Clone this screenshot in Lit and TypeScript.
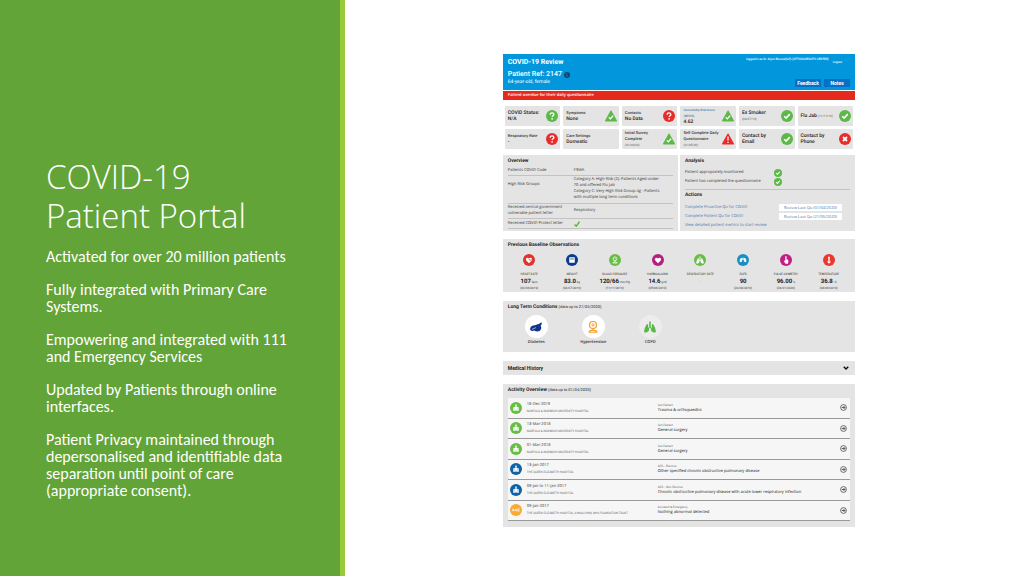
import { LitElement, html, svg, css } from "lit";
import { customElement, property, state } from "lit/decorators.js";

type Status = "ok" | "unknown" | "okTri" | "warnTri" | "no" | "";

const GREEN = "#5cb947";
const RED = "#e62d2a";

const tick = (colour = "#fff") =>
  svg`<path d="M6.5 12.5l3.8 3.8 7.2-8" fill="none" stroke=${colour} stroke-width="3.2"/>`;

const question = svg`
  <path d="M8.4 9.4c0-2.4 1.6-3.6 3.7-3.6s3.6 1.3 3.6 3.2c0 2.6-3.4 2.6-3.4 5.2" fill="none" stroke="#fff" stroke-width="2.6"/>
  <circle cx="12.2" cy="17.7" r="1.7" fill="#fff"/>`;

const triangle = (fill: string) =>
  svg`<path d="M12 2.5L22.5 21.5H1.5z" fill=${fill} stroke=${fill} stroke-width="3" stroke-linejoin="round"/>`;

@customElement("status-icon")
export class StatusIcon extends LitElement {
  @property() kind: Status = "ok";
  @property() tone = "green";
  static styles = css`
    :host { display: block; flex: none; }
    svg { display: block; width: 100%; height: 100%; }
  `;
  render() {
    const tone = this.tone === "red" ? RED : GREEN;
    const body =
      this.kind === "ok" ? svg`<circle cx="12" cy="12" r="12" fill=${tone}/>${tick()}`
      : this.kind === "unknown" ? svg`<circle cx="12" cy="12" r="12" fill=${tone}/>${question}`
      : this.kind === "no" ? svg`<circle cx="12" cy="12" r="12" fill=${RED}/><path d="M8 8l8 8M16 8l-8 8" stroke="#fff" stroke-width="3.6"/>`
      : this.kind === "okTri" ? svg`${triangle(tone)}<path d="M7.6 14.8l3 3 5.6-6.2" fill="none" stroke="#fff" stroke-width="2.6"/>`
      : svg`${triangle(RED)}<path d="M12 7v8" stroke="#fff" stroke-width="2.4"/><circle cx="12" cy="18.6" r="1.5" fill="#fff"/>`;
    return html`<svg viewBox="0 0 24 24" aria-hidden="true">${body}</svg>`;
  }
}

const lungs = (fill: string) => svg`
  <path d="M11 5v7l-1.4 1.2V8.4C8 7.4 5.2 11.600 4.400 18.200c-.1 1.800 3.800 1 5.600-.8.9-1 .8-2.400.8-3.600L12 12.800l1.200 1c0 1.200-.1 2.600.8 3.600 1.800 1.800 5.700 2.600 5.600.8C18.800 11.600 16 7.400 14.400 8.400v4.800L13 12V5z" fill=${fill}/>`;

const glyphs: Record<string, unknown> = {
  heart: svg`<path d="M12 18.500L6.500 13C3.800 9.500 8.500 5 12 8.800 15.500 5 20.200 9.500 17.500 13z" fill="#fff"/><path d="M11 10.500h2l1.200 2.500 1-1.500h3" fill="none" stroke="#e0322e" stroke-width="1.200"/>`,
  weight: svg`<rect x="6.500" y="6.500" width="11" height="11" rx="1.200" fill="#fff"/><path d="M8.500 10h7" stroke="#0b3a8d" stroke-width="1.600"/>`,
  pressure: svg`<circle cx="12" cy="9.500" r="3.700" fill="none" stroke="#fff" stroke-width="1.500"/><path d="M12 9.500l1.500-1.500M12 13.200v2.300M7.500 18c0-3 9-3 9 0z" fill="none" stroke="#fff" stroke-width="1.500"/>`,
  blood: svg`<path d="M12 18.500L6.500 13C3.800 9.500 8.500 5 12 8.800 15.500 5 20.200 9.500 17.500 13z" fill="#fff"/>`,
  lungs: lungs("#fff"),
  flow: svg`<path d="M5.500 13a6.500 5.500 0 0 1 13 0v3h-4v-3.500h-5V16h-4z" fill="#fff"/><path d="M12 8v9" stroke="#1b8fc4" stroke-width="1.300"/>`,
  finger: svg`<path d="M10.500 4.500h2.600v6.500c2.600 0 3.900.9 3.700 3.500l-.8 5h-5L7.500 14l1-1 2 1.200z" fill="#fff"/>`,
  temp: svg`<path d="M10.300 6.500a1.700 1.700 0 0 1 3.400 0v6.700a3 3 0 1 1-3.400 0z" fill="#fff"/><path d="M12 9v6.500" stroke="#ec3630" stroke-width="1"/>`,
  hospital: svg`<path d="M6.500 17.500V10.500h3V9h5v1.500h3v7z" fill="#fff"/><path d="M12 5v4M10 6.500h4" stroke="#fff" stroke-width="1.500"/><path d="M8.500 13.500H10M14 13.500h1.500M12 17.500v-2.500" stroke="currentColor" stroke-width="1.300"/>`,
  emergency: svg`<path d="M4.500 14.500l2-5 2 5M5.300 13h2.400M10 14l1-4 2 4.200M11 14.300l3-4M15.300 9.800h4M15.300 12h3.400M15.300 14.200h4M15.500 9.500v5" fill="none" stroke="#fff" stroke-width="1.300"/>`,
};

@customElement("round-icon")
export class RoundIcon extends LitElement {
  @property() name = "";
  @property() tone = "#5cb947";
  static styles = css`
    :host { display: block; flex: none; }
    svg { display: block; width: 100%; height: 100%; }
  `;
  render() {
    return html`<svg viewBox="0 0 24 24" color=${this.tone} aria-hidden="true">
      <circle cx="12" cy="12" r="12" fill=${this.tone} />${glyphs[this.name]}
    </svg>`;
  }
}

interface Card { small?: string; title?: string; label?: string; value?: string; note?: string; inline?: string; link?: boolean; icon: Status; tone?: string }

const cards: Card[] = [
  { title: "COVID Status:\nN/A", icon: "unknown" },
  { label: "Symptoms", value: "None", icon: "okTri" },
  { label: "Contacts", value: "No Data", icon: "unknown", tone: "red" },
  { label: "Comorbidity Risk Score\n(WHHD)", value: "4.62", link: true, icon: "okTri" },
  { title: "Ex Smoker", note: "(02/07/19)", icon: "ok" },
  { title: "Flu Jab", inline: "(11/11/19)", icon: "ok" },
  { label: "Respiratory Rate", value: "-", icon: "unknown", tone: "red" },
  { label: "Care Settings", value: "Domestic", icon: "" },
  { small: "Initial Survey\nComplete", note: "(01/04/20)", icon: "okTri" },
  { small: "Self Complete Daily\nQuestionnaire", note: "(31/05/20)", icon: "warnTri" },
  { title: "Contact by\nEmail", icon: "ok" },
  { title: "Contact by\nPhone", icon: "no" },
];

const observations = [
  ["heart", "#e0322e", "HEART RATE", "107", "bpm", "(03/08/2019)"],
  ["weight", "#0b3a8d", "WEIGHT", "83.0", "kg", "(02/07/2019)"],
  ["pressure", "#67bd45", "BLOOD PRESSURE", "120/66", "mm/Hg", "(11/11/2019)"],
  ["blood", "#b5207f", "HAEMOGLOBIN", "14.6", "g/dl", "(05/08/2019)"],
  ["lungs", "#67bd45", "RESPIRATORY RATE", "", "-", ""],
  ["flow", "#1b8fc4", "EGFR", "90", "", "(22/06/2019)"],
  ["finger", "#c01f84", "PULSE OXIMETRY", "96.00", "%", "(04/01/2020)"],
  ["temp", "#ec3630", "TEMPERATURE", "36.8", "°C", "(04/08/2019)"],
];

const activity = [
  ["hospital", "#67bd45", "18-Dec-2019", "NORFOLK & NORWICH UNIVERSITY HOSPITAL", "Out Patient", "Trauma & orthopaedics"],
  ["hospital", "#67bd45", "13-Mar-2018", "NORFOLK & NORWICH UNIVERSITY HOSPITAL", "Out Patient", "General surgery"],
  ["hospital", "#67bd45", "01-Mar-2018", "NORFOLK & NORWICH UNIVERSITY HOSPITAL", "Out Patient", "General surgery"],
  ["hospital", "#0f62a6", "13-Jan-2017", "THE QUEEN ELIZABETH HOSPITAL", "APC - Elective", "Other specified chronic obstructive pulmonary disease"],
  ["hospital", "#0f62a6", "09-Jan to 11-Jan-2017", "THE QUEEN ELIZABETH HOSPITAL", "APC - Non Elective", "Chronic obstructive pulmonary disease with acute lower respiratory infection"],
  ["emergency", "#f9aa35", "09-Jan-2017", "THE QUEEN ELIZABETH HOSPITAL, KINGS LYNN, NHS FOUNDATION TRUST", "Accident & Emergency", "Nothing abnormal detected"],
];

@customElement("patient-dashboard")
export class PatientDashboard extends LitElement {
  @state() private historyOpen = false;

  static styles = css`
    :host { display: block; font: 400 4px/6px "Open Sans", Roboto, sans-serif; color: #333; text-rendering: geometricPrecision; }
    * { box-sizing: border-box; }
    h2, h3, p, ul, dl { margin: 0; padding: 0; }
    ul { list-style: none; }
    button { font: inherit; border: 0; padding: 0; margin: 0; background: none; color: inherit; }
    a { color: #4576ae; text-decoration: none; }
    .banner { display: flex; justify-content: space-between; min-height: 36px; padding: 4px 5px 3px; background: #0297dc; color: #fff; font-family: Roboto, sans-serif; }
    .banner h2 { font-size: 7px; line-height: 8px; font-weight: 700; }
    .ref { display: flex; align-items: center; gap: 2px; margin-top: 5px; font-size: 7px; line-height: 7px; font-weight: 500; }
    .info { width: 6px; height: 6px; }
    .age { font-size: 5px; line-height: 8px; font-weight: 400; }
    .tools { display: flex; flex-direction: column; justify-content: space-between; align-items: flex-end; }
    .session { display: flex; gap: 4px; font-size: 3px; line-height: 3px; font-weight: 500; padding: 0 8px 0 0; }
    .session a { color: #fff; margin-top: 3px; }
    .buttons { display: flex; gap: 3px; }
    .buttons button { min-width: 26px; height: 8px; background: #0670c6; font-size: 5px; line-height: 8px; font-weight: 700; }
    .alert { margin-top: 1px; padding: 0 5px; background: #e42a1d; color: #fff; line-height: 9px; font-weight: 600; }
    .cards { display: grid; grid-template-columns: repeat(6, 1fr); gap: 3px; padding: 6px 2px; font-family: Roboto, sans-serif; }
    .card { display: flex; align-items: center; justify-content: space-between; height: 20px; padding: 0 2px 0 3px; background: #e4e4e4; border-radius: 1px; }
    .card status-icon { width: 12px; height: 12px; }
    .words p { white-space: pre-line; }
    .title, .value { font-size: 5px; font-weight: 500; color: #222; }
    .note { font-size: 3px; font-weight: 400; color: #555; }
    .label, .small { font-weight: 500; }
    .label a { font-size: 3px; white-space: pre; }
    .pair { display: grid; grid-template-columns: 1fr 1fr; gap: 2px; }
    .panel { background: #e4e4e4; padding: 2px 5px; }
    .panel + .panel { margin-top: 9px; }
    .gap { margin-top: 8px; }
    .pair .panel { margin-top: 0; padding-bottom: 1px; }
    h3 { font-family: Roboto, sans-serif; font-size: 5px; line-height: 8px; font-weight: 700; color: #262626; }
    h3 small { font-size: 4px; line-height: 1px; font-weight: 400; }
    table { width: 100%; border-collapse: collapse; margin-top: 2px; }
    .head-col { width: 40%; }
    th, td { font-weight: 400; text-align: left; vertical-align: middle; padding: 1px 0; border-bottom: 1px solid #c2c2c2; white-space: nowrap; }
    tr.groups th { vertical-align: top; padding-top: 6px; }
    tr.groups th, tr.groups td { padding-bottom: 2px; }
    tr.letter th, tr.letter td { padding-top: 2px; }
    .yes { display: block; width: 6px; height: 6px; }
    .checks { display: grid; gap: 1px; padding: 4px 0 3px; border-bottom: 1px solid #c2c2c2; }
    .checks li { display: flex; align-items: center; width: 97px; justify-content: space-between; line-height: 8px; }
    .checks status-icon { width: 8px; height: 8px; }
    h3.actions { margin-top: 1px; }
    ul.actions { margin-top: 4px; }
    .actions li { display: grid; grid-template-columns: 94px 63px; align-items: center; height: 9px; }
    .actions .view { grid-column: 1 / -1; }
    .actions button { height: 7px; line-height: 7px; background: #fff; color: #4576ae; white-space: nowrap; }
    .observations { display: grid; grid-template-columns: repeat(8, 1fr); padding-top: 5px; text-align: center; font-family: Roboto, sans-serif; }
    .observations li { display: flex; flex-direction: column; align-items: center; }
    .observations round-icon { width: 12px; height: 12px; }
    .observations .name { font-size: 3px; margin-top: 5px; line-height: 6px; white-space: nowrap; }
    .observations .reading { height: 9px; line-height: 9px; font-size: 3px; white-space: nowrap; }
    .reading b { font-size: 6px; font-weight: 700; color: #222; }
    .observations .on { font-size: 3px; line-height: 4px; }
    .conditions { display: flex; padding: 4px 0; }
    .conditions li { width: 57px; display: grid; justify-items: center; font-weight: 600; }
    .disc { width: 23px; height: 23px; border-radius: 50%; background: #fff; display: grid; place-items: center; margin-bottom: 2px; }
    .disc.pale { background: #ececec; }
    .disc svg { width: 14px; height: 14px; }
    .history { display: flex; align-items: center; justify-content: space-between; width: 100%; height: 10px; text-align: left; }
    .history svg { width: 8px; height: 6px; }
    .open svg { transform: rotate(180deg); }
    .activity { display: grid; grid-auto-rows: 1fr; min-height: 123px; margin-top: 4px; }
    .activity li { display: grid; grid-template-columns: 17px 131px 1fr 8px; align-items: center; padding: 0 2px; background: #f6f6f6; border-bottom: 1px solid #999; }
    .activity round-icon { width: 12px; height: 12px; }
    .activity .site, .activity .kind { font-family: Roboto, sans-serif; font-size: 3px; color: #666; white-space: nowrap; }
    .activity .kind + p { white-space: nowrap; color: #111; }
    .arrow { display: block; width: 7px; height: 7px; }
    .arrow svg { display: block; width: 7px; height: 7px; }
    .activity-panel { padding-bottom: 6px; }
  `;

  private card(c: Card) {
    return html`<li class="card">
      <div class="words">
        ${c.title ? html`<p class="title">${c.title}${c.inline ? html` <span class="note">${c.inline}</span>` : ""}</p>` : ""}
        ${c.small ? html`<p class="small">${c.small}</p>` : ""}
        ${c.label ? html`<p class="label">${c.link ? html`<a href="#risk">${c.label}</a>` : c.label}</p>` : ""}
        ${c.value ? html`<p class="value">${c.value}</p>` : ""}
        ${c.note ? html`<p class="note">${c.note}</p>` : ""}
      </div>
      ${c.icon ? html`<status-icon kind=${c.icon} tone=${c.tone ?? "green"}></status-icon>` : ""}
    </li>`;
  }

  render() {
    return html`
      <header class="banner">
        <div>
          <h2>COVID-19 Review</h2>
          <p class="ref">Patient Ref: 2147
            <svg class="info" viewBox="0 0 12 12" aria-hidden="true"><circle cx="6" cy="6" r="6" fill="#12466f"/><path d="M6 2.500v1.500M6 5v4.500" stroke="#0297dc" stroke-width="1.500"/></svg>
          </p>
          <p class="age">64-year-old, female</p>
        </div>
        <div class="tools">
          <div class="session"><span>logged in as Dr. Arjun Bhowal(GP) (UTTOXGHEALTH CENTRE)</span><a href="#logout">Logout</a></div>
          <div class="buttons"><button type="button">Feedback</button><button type="button">Notes</button></div>
        </div>
      </header>
      <p class="alert" role="alert">Patient overdue for their daily questionnaire</p>
      <ul class="cards">${cards.map((c) => this.card(c))}</ul>

      <div class="pair">
        <section class="panel">
          <h3>Overview</h3>
          <table>
            <colgroup><col class="head-col" /><col /></colgroup>
            <tr><th scope="row">Patients COVID Code</th><td>F9WA</td></tr>
            <tr class="groups"><th scope="row">High Risk Groups</th><td>Category A: High Risk (2): Patients Aged under<br />70 and offered Flu Jab<br />Category C: Very High Risk Group 4g - Patients<br />with multiple long term conditions</td></tr>
            <tr><th scope="row">Received central government<br />vulnerable patient letter</th><td>Respiratory</td></tr>
            <tr class="letter"><th scope="row">Received COVID Protect letter</th><td><svg class="yes" viewBox="0 0 12 12" role="img" aria-label="Yes"><path d="M1 7l3.500 3.500L11 1.500" fill="none" stroke="#4fb82e" stroke-width="2.600"/></svg></td></tr>
          </table>
        </section>
        <section class="panel">
          <h3>Analysis</h3>
          <ul class="checks">
            <li>Patient appropiately monitored <status-icon kind="ok"></status-icon></li>
            <li>Patient has completed the questionnaire <status-icon kind="ok"></status-icon></li>
          </ul>
          <h3 class="actions">Actions</h3>
          <ul class="actions">
            <li><a href="#proactive">Complete Proactive Qu for COVID</a><button type="button">Review Last Qu (01/04/2020)</button></li>
            <li><a href="#patient">Complete Patient Qu for COVID</a><button type="button">Review Last Qu (21/05/2020)</button></li>
            <li><a class="view" href="#metrics">View detailed patient metrics to start review</a></li>
          </ul>
        </section>
      </div>

      <section class="panel gap">
        <h3>Previous Baseline Observations</h3>
        <ul class="observations">
          ${observations.map(([icon, tone, name, value, unit, on]) => html`<li>
            <round-icon name=${icon} tone=${tone}></round-icon>
            <p class="name">${name}</p>
            <p class="reading">${value ? html`<b>${value}</b>` : ""} ${unit}</p>
            <p class="on">${on}</p>
          </li>`)}
        </ul>
      </section>

      <section class="panel">
        <h3>Long Term Conditions <small>(data up to 27/05/2020)</small></h3>
        <ul class="conditions">
          <li><span class="disc"><svg viewBox="0 0 24 24" aria-hidden="true"><path d="M2 14c1-3 4-5 8-5 3 0 4-2 7-2l4-3 1 3-2 3c2 3 1 7-2 9-3 1-6 1-9-1-4 2-8 0-7-4z" fill="#10348c"/><path d="M5 16l7-3" stroke="#fff" stroke-width="1"/></svg></span>Diabetes</li>
          <li><span class="disc"><svg viewBox="0 0 24 24" aria-hidden="true"><circle cx="12" cy="8.500" r="6" fill="none" stroke="#f29a2e" stroke-width="2"/><circle cx="12" cy="8.500" r="2" fill="none" stroke="#f29a2e" stroke-width="1.500"/><path d="M12 14.500v3M5.500 21c0-5 13-5 13 0z" fill="none" stroke="#f29a2e" stroke-width="2"/></svg></span>Hypertension</li>
          <li><span class="disc pale"><svg viewBox="3 3 18 18" aria-hidden="true">${lungs("#58b848")}</svg></span>COPD</li>
        </ul>
      </section>

      <section class="panel">
        <h3><button class="history ${this.historyOpen ? "open" : ""}" type="button" aria-expanded=${this.historyOpen} @click=${() => (this.historyOpen = !this.historyOpen)}>
          Medical History
          <svg viewBox="0 0 16 12" aria-hidden="true"><path d="M3.500 3.500L8 8l4.500-4.500" fill="none" stroke="#111" stroke-width="3"/></svg>
        </button></h3>
      </section>

      <section class="panel activity-panel">
        <h3>Activity Overview <small>(data up to 01/04/2020)</small></h3>
        <ul class="activity">
          ${activity.map(([icon, tone, date, site, kind, detail]) => html`<li>
            <round-icon name=${icon} tone=${tone}></round-icon>
            <div><p>${date}</p><p class="site">${site}</p></div>
            <div><p class="kind">${kind}</p><p>${detail}</p></div>
            <button class="arrow" type="button" aria-label="Open ${date}"><svg viewBox="0 0 14 14"><circle cx="7" cy="7" r="5.800" fill="none" stroke="#333" stroke-width="1.400"/><path d="M3.500 7h6M7 4l3 3-3 3" fill="none" stroke="#333" stroke-width="1.600"/></svg></button>
          </li>`)}
        </ul>
      </section>
    `;
  }
}

@customElement("app-root")
export class AppRoot extends LitElement {
  static styles = css`
    :host { display: flex; min-height: 100vh; background: #fff; }
    * { box-sizing: border-box; }
    aside { width: 33.7%; flex: none; padding: 157px 48px 24px 46px; background: #62a438; border-right: 5px solid #99cb38; color: #fff; font-family: Carlito, Lato, "Open Sans", sans-serif; }
    h1 { margin: 0 0 13px; font-family: "Open Sans", sans-serif; font-size: 33px; line-height: 39px; font-weight: 300; }
    p { margin: 0 0 16px; font-size: 16px; line-height: 17px; }
    main { flex: 1; padding: 54px 16.5% 48px 15.4%; min-width: 0; }
  `;
  render() {
    return html`
      <aside>
        <h1>COVID-19<br />Patient Portal</h1>
        <p>Activated for over 20 million patients</p>
        <p>Fully integrated with Primary Care Systems.</p>
        <p>Empowering and integrated with 111 and Emergency Services</p>
        <p>Updated by Patients through online interfaces.</p>
        <p>Patient Privacy maintained through depersonalised and identifiable data separation until point of care (appropriate consent).</p>
      </aside>
      <main><patient-dashboard></patient-dashboard></main>
    `;
  }
}
